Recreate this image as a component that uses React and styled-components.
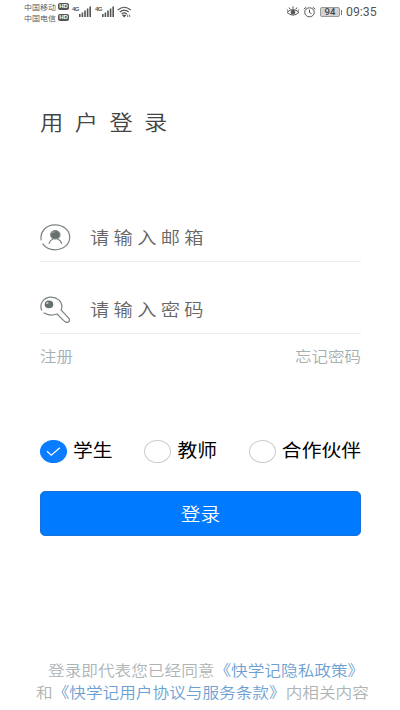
import React, { useState } from 'react'
import styled, { createGlobalStyle } from 'styled-components'


const GlobalStyle = createGlobalStyle`
  * { box-sizing: border-box; }

  body {
    margin: 0;
    background: #fff;
    font-family: "Noto Sans CJK SC", sans-serif;
  }
`

const Page = styled.div`
  width: 400px;
  height: 710px;
  display: flex;
  flex-direction: column;
  overflow: hidden;
  background: #fff;
`

// every label on this screen is drawn a bit wider than tall
const Text = styled.span`
  display: block;
  white-space: nowrap;
  transform: scaleY(${p => p.$ratio || 0.9});
  font-size: ${p => p.$size}px;
  line-height: 20px;
  font-weight: ${p => p.$weight || 400};
  letter-spacing: ${p => p.$gap || 0}px;
  color: ${p => p.$color || '#000'};
`

const StatusBar = styled.div`
  height: 24px;
  padding: 0 22px 0 24px;
  display: flex;
  justify-content: space-between;
`

const StatusLeft = styled.div`
  display: flex;
  height: 24px;
`

const Carriers = styled.div`
  width: 48px;
`

const Carrier = styled.div`
  display: flex;
  align-items: center;
  height: 11px;
  gap: 2px;
  padding-top: 2px;
`

const Hd = styled.span`
  width: 11px;
  height: 7px;
  border-radius: 2px;
  background: #555;
  color: #fff;
  font: bold 6px/7px "Liberation Sans", sans-serif;
  text-align: center;
`

const Signal = styled.div`
  display: flex;
  width: 22px;
  padding-top: 6px;
  margin-right: 1px;
`

const Net = styled.span`
  width: 7px;
  font: bold 6px/7px "Liberation Sans", sans-serif;
  letter-spacing: -0.5px;
  color: #555;
`

const StatusRight = styled.div`
  display: flex;
  align-items: center;
  height: 24px;
`

const Battery = styled.div`
  display: flex;
  align-items: center;
  margin: 0 4px 0 4px;

  &:after {
    content: '';
    width: 1px;
    height: 5px;
    margin-left: 1px;
    background: #777;
  }
`

const Level = styled.span`
  width: 20px;
  height: 10px;
  border: 1px solid #999;
  border-radius: 2px;
  background: #d2d2d2;
  color: #444;
  font: 500 9.5px/8px Roboto, sans-serif;
  text-align: center;
`

const Clock = styled.span`
  width: 32px;
  font: 12.3px/20px Roboto, sans-serif;
  color: #555;
  white-space: nowrap;
`

const Form = styled.div`
  padding: 87px 39px 0 40px;
  display: flex;
  flex-direction: column;
`

const Title = styled.div`
  height: 103px;
`

const Field = styled.label`
  display: flex;
  align-items: center;
  height: ${p => p.$height}px;
  padding: ${p => p.$top}px 0 2px;
  border-bottom: 1px solid #ebebeb;
  gap: 19px;

  svg {
    flex: none;
    margin-top: 2px;
  }
`

const Links = styled.div`
  display: flex;
  justify-content: space-between;
  padding-top: 8px;
  height: 105px;
`

const Roles = styled.div`
  display: flex;
  justify-content: space-between;
  height: 24px;
`

const Role = styled.div`
  display: flex;
  align-items: center;
  gap: 6px;
  cursor: pointer;

  ${Text} {
    margin-top: -2px;
  }
`

const Radio = styled.span`
  width: 27px;
  height: 23px;
  display: flex;
  align-items: center;
  justify-content: center;
  border-radius: 50%;
  border: 1px solid ${p => (p.$on ? '#0a7cff' : '#ccc')};
  background: ${p => (p.$on ? '#0a7cff' : '#fff')};
`

const LoginButton = styled.button`
  display: flex;
  align-items: center;
  justify-content: center;
  width: 321px;
  height: 45px;
  margin-top: 28px;
  padding: 1px 0 0;
  border: 1px solid #1472d8;
  border-radius: 5px;
  background: #007aff;
  font-family: inherit;
`

const Footer = styled.div`
  margin-top: auto;
  padding: 0 0 8px 36px;
  display: flex;
  flex-direction: column;
  gap: 2px;
`

const FirstLine = styled.div`
  padding-left: 12px;
`

const Link = styled.span`
  color: #6d9fd2;
`


const Bars = () => (
  <svg width="13" height="11" viewBox="0 0 13 11" fill="#555">
    <rect x="0" y="8" width="1.6" height="3" />
    <rect x="2.6" y="6.5" width="1.6" height="4.5" />
    <rect x="5.2" y="4.5" width="1.6" height="6.5" />
    <rect x="7.8" y="2.5" width="1.6" height="8.5" />
    <rect x="10.4" y="0.5" width="1.6" height="10.5" />
  </svg>
)

const Wifi = () => (
  <svg width="15" height="12" viewBox="0 0 15 12" fill="none" stroke="#555" strokeWidth="1.1" style={{ marginTop: 6, marginLeft: -1 }}>
    <path d="M.8 4Q7.2-1.5 13.7 4M2.8 6Q7.2 2.2 11.7 6M4.7 8Q7.2 5.8 9.7 8" />
    <path d="M6 9.3L7.2 10.6L8.4 9.3Z" fill="#555" />
    <path d="M10.7 8.5V11M12.7 8.5V11" strokeWidth=".8" />
  </svg>
)

const Eye = () => (
  <svg width="14" height="12" viewBox="0 0 14 12" fill="none" stroke="#555" strokeWidth="1">
    <path d="M1 6.3Q7 .8 13 6.3Q7 12 1 6.3ZM7 .4V2.8M3.1 1.5L4.2 3.4M10.9 1.5L9.8 3.4M.8 3.5L2.2 4.8M13.2 3.5L11.8 4.8" />
    <circle cx="7" cy="6.2" r="1.9" fill="#555" />
  </svg>
)

const Alarm = () => (
  <svg width="13" height="12" viewBox="0 0 13 12" fill="none" stroke="#555" strokeWidth="1" style={{ marginLeft: 3 }}>
    <ellipse cx="6.5" cy="6.3" rx="4.8" ry="4.5" />
    <path d="M6.5 3.7V6.5L8.5 7.7M.8 3.2L3.3 1.1M12.2 3.2L9.7 1.1" />
  </svg>
)

const UserIcon = () => (
  <svg width="31" height="27" viewBox="0 0 31 27" fill="none" stroke="#7c8483" strokeWidth="1.2">
    <path d="M1.3 16.3C-.7 8 6 .9 15 .9C23.5.9 29.7 6.3 29.7 13.2C29.7 20.3 23.3 25.8 15 25.8C9.6 25.8 5.2 23.5 2.6 19.7" />
    <ellipse cx="15.3" cy="10.8" rx="4.7" ry="4.1" fill="#65716f" />
    <path d="M11.8 9.3Q13 7.8 15 7.9" stroke="#aab1b0" strokeWidth=".8" />
    <path d="M9 19.8Q10.2 15.8 13.3 15M17.3 15Q20.6 16 21.8 19.8" />
  </svg>
)

const KeyIcon = () => (
  <svg width="31" height="28" viewBox="0 0 31 28" fill="none" stroke="#7c8483" strokeWidth="1.2">
    <path d="M1.8 14.6C-1.2 7.5 4 1.2 11 1.2C17.2 1.2 21.9 5.2 21.9 10.4Q21.9 12.3 21 14L28.7 22.2C31 25 27.7 27.8 24.8 25.6L17 18Q9.5 20.6 3.6 16.8" />
    <ellipse cx="9" cy="8.4" rx="4.3" ry="3.8" fill="#65716f" stroke="none" />
    <ellipse cx="7.3" cy="7" rx="1.3" ry=".9" fill="#c5caca" stroke="none" />
  </svg>
)

const Check = () => (
  <svg width="15" height="11" viewBox="0 0 15 11" fill="none" stroke="#fff" strokeWidth="1.2">
    <path d="M1 5.3L5.3 9.3L13.8 1.7" />
  </svg>
)


const roles = ['学生', '教师', '合作伙伴']

const App = () => {
  const [role, setRole] = useState('学生')

  return (
    <Page>
      <GlobalStyle />

      <StatusBar>
        <StatusLeft>
          <Carriers>
            <Carrier><Text $size={8} $weight={350} $color="#555">中国移动</Text><Hd>HD</Hd></Carrier>
            <Carrier><Text $size={8} $weight={350} $color="#555">中国电信</Text><Hd>HD</Hd></Carrier>
          </Carriers>
          <Signal><Net>4G</Net><Bars /></Signal>
          <Signal><Net>4G</Net><Bars /></Signal>
          <Wifi />
        </StatusLeft>
        <StatusRight>
          <Eye />
          <Alarm />
          <Battery><Level>94</Level></Battery>
          <Clock>09:35</Clock>
        </StatusRight>
      </StatusBar>

      <Form>
        <Title><Text $size={23.3} $gap={11.4} $weight={350} $color="#444">用户登录</Text></Title>

        <Field $height={48} $top={0}>
          <UserIcon />
          <Text $size={19.2} $gap={4.4} $weight={350} $color="#666">请输入邮箱</Text>
        </Field>
        <Field $height={72} $top={24}>
          <KeyIcon />
          <Text $size={19.2} $gap={4.4} $weight={350} $color="#666">请输入密码</Text>
        </Field>

        <Links>
          <Text $size={16.5} $weight={350} $color="#a6b0b2">注册</Text>
          <Text $size={16.5} $weight={350} $color="#a6b0b2">忘记密码</Text>
        </Links>

        <Roles>
          {roles.map(r => (
            <Role key={r} onClick={() => setRole(r)}>
              <Radio $on={r === role}>{r === role && <Check />}</Radio>
              <Text $size={19.8}>{r}</Text>
            </Role>
          ))}
        </Roles>

        <LoginButton><Text $size={19.7} $weight={350} $color="#fff">登录</Text></LoginButton>
      </Form>

      <Footer>
        <FirstLine>
          <Text $size={16.65} $weight={350} $color="#adb4b5">登录即代表您已经同意<Link>《快学记隐私政策》</Link></Text>
        </FirstLine>
        <Text $size={16.65} $weight={350} $color="#adb4b5">和<Link>《快学记用户协议与服务条款》</Link>内相关内容</Text>
      </Footer>
    </Page>
  )
}

export default App
